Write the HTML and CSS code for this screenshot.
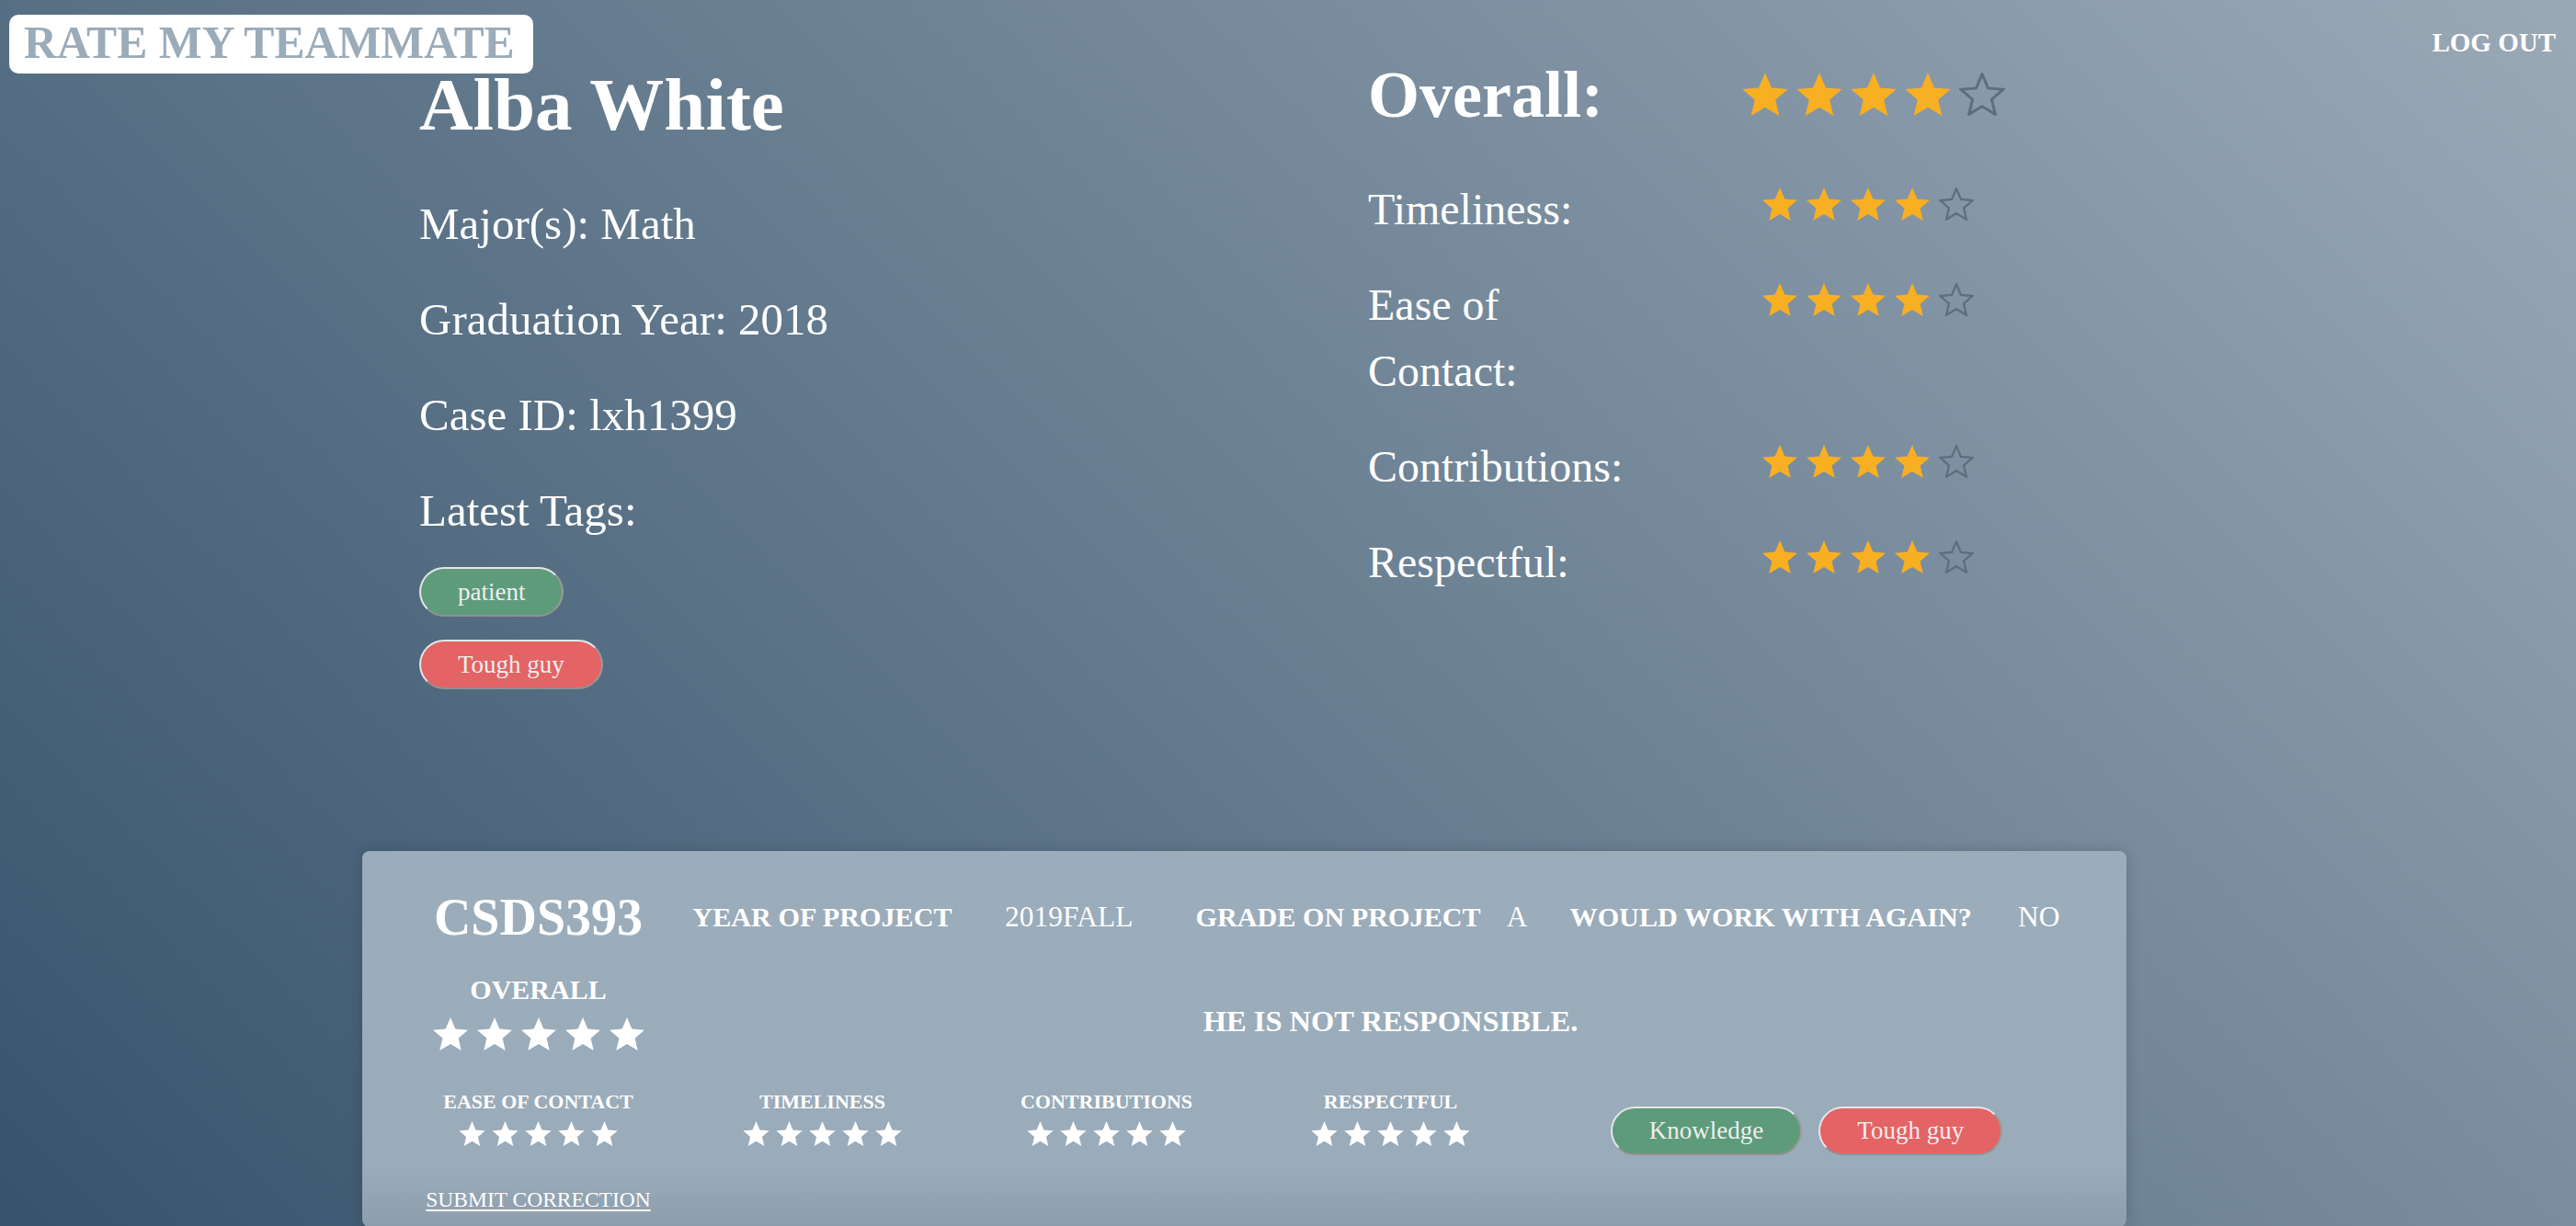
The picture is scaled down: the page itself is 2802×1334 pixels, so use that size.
FILE: index.html
```html
<!DOCTYPE html>
<html lang="en">
<head>
<meta charset="utf-8">
<title>Rate My Teammate - Alba White</title>
<link rel="stylesheet" href="styles.css">
</head>
<body>
<svg class="sprite" aria-hidden="true">
  <symbol id="star" viewBox="2 2 20 19"><path d="M12 17.27L18.18 21l-1.64-7.03L22 9.24l-7.19-.61L12 2 9.19 8.63 2 9.24l5.46 4.73L5.82 21z"/></symbol>
  <symbol id="star-o" viewBox="1.3 1.3 21.4 20.4"><path d="M12 17.27L18.18 21l-1.64-7.03L22 9.24l-7.19-.61L12 2 9.19 8.63 2 9.24l5.46 4.73L5.82 21z" fill="none" stroke="currentColor" stroke-width="1.3"/></symbol>
</svg>

<header class="topbar">
  <a class="brand" href="#">RATE MY TEAMMATE</a>
  <a class="logout" href="#">LOG OUT</a>
</header>

<main class="page">
  <section class="profile">
    <div class="info">
      <h1 class="name">Alba White</h1>
      <p class="fact">Major(s): Math</p>
      <p class="fact">Graduation Year: 2018</p>
      <p class="fact">Case ID: lxh1399</p>
      <p class="fact">Latest Tags:</p>
      <div class="tag-list">
        <span class="tag tag-good">patient</span>
        <span class="tag tag-bad">Tough guy</span>
      </div>
    </div>

    <div class="ratings">
      <div class="rating-row rating-overall">
        <span class="rating-label">Overall:</span>
        <div class="stars stars-lg">
          <svg class="star gold"><use href="#star"/></svg>
          <svg class="star gold"><use href="#star"/></svg>
          <svg class="star gold"><use href="#star"/></svg>
          <svg class="star gold"><use href="#star"/></svg>
          <svg class="star empty"><use href="#star-o"/></svg>
        </div>
      </div>
      <div class="rating-row">
        <span class="rating-label">Timeliness:</span>
        <div class="stars stars-md">
          <svg class="star gold"><use href="#star"/></svg>
          <svg class="star gold"><use href="#star"/></svg>
          <svg class="star gold"><use href="#star"/></svg>
          <svg class="star gold"><use href="#star"/></svg>
          <svg class="star empty"><use href="#star-o"/></svg>
        </div>
      </div>
      <div class="rating-row">
        <span class="rating-label">Ease of Contact:</span>
        <div class="stars stars-md">
          <svg class="star gold"><use href="#star"/></svg>
          <svg class="star gold"><use href="#star"/></svg>
          <svg class="star gold"><use href="#star"/></svg>
          <svg class="star gold"><use href="#star"/></svg>
          <svg class="star empty"><use href="#star-o"/></svg>
        </div>
      </div>
      <div class="rating-row">
        <span class="rating-label">Contributions:</span>
        <div class="stars stars-md">
          <svg class="star gold"><use href="#star"/></svg>
          <svg class="star gold"><use href="#star"/></svg>
          <svg class="star gold"><use href="#star"/></svg>
          <svg class="star gold"><use href="#star"/></svg>
          <svg class="star empty"><use href="#star-o"/></svg>
        </div>
      </div>
      <div class="rating-row">
        <span class="rating-label">Respectful:</span>
        <div class="stars stars-md">
          <svg class="star gold"><use href="#star"/></svg>
          <svg class="star gold"><use href="#star"/></svg>
          <svg class="star gold"><use href="#star"/></svg>
          <svg class="star gold"><use href="#star"/></svg>
          <svg class="star empty"><use href="#star-o"/></svg>
        </div>
      </div>
    </div>
  </section>

  <section class="reviews">
    <article class="review-card">
      <div class="review-head">
        <h2 class="course">CSDS393</h2>
        <span class="meta-label meta-year-label">YEAR OF PROJECT</span>
        <span class="meta-value meta-year">2019FALL</span>
        <span class="meta-label meta-grade-label">GRADE ON PROJECT</span>
        <span class="meta-value meta-grade">A</span>
        <span class="meta-label meta-again-label">WOULD WORK WITH AGAIN?</span>
        <span class="meta-value meta-again">NO</span>
      </div>

      <div class="review-row review-overall">
        <div class="stat stat-main">
          <span class="stat-label stat-label-lg">OVERALL</span>
          <div class="stars stars-md">
            <svg class="star white"><use href="#star"/></svg>
            <svg class="star white"><use href="#star"/></svg>
            <svg class="star white"><use href="#star"/></svg>
            <svg class="star white"><use href="#star"/></svg>
            <svg class="star white"><use href="#star"/></svg>
          </div>
        </div>
        <p class="comment">HE IS NOT RESPONSIBLE.</p>
      </div>

      <div class="review-row review-stats">
        <div class="stat">
          <span class="stat-label">EASE OF CONTACT</span>
          <div class="stars stars-sm">
            <svg class="star white"><use href="#star"/></svg>
            <svg class="star white"><use href="#star"/></svg>
            <svg class="star white"><use href="#star"/></svg>
            <svg class="star white"><use href="#star"/></svg>
            <svg class="star white"><use href="#star"/></svg>
          </div>
        </div>
        <div class="stat">
          <span class="stat-label">TIMELINESS</span>
          <div class="stars stars-sm">
            <svg class="star white"><use href="#star"/></svg>
            <svg class="star white"><use href="#star"/></svg>
            <svg class="star white"><use href="#star"/></svg>
            <svg class="star white"><use href="#star"/></svg>
            <svg class="star white"><use href="#star"/></svg>
          </div>
        </div>
        <div class="stat">
          <span class="stat-label">CONTRIBUTIONS</span>
          <div class="stars stars-sm">
            <svg class="star white"><use href="#star"/></svg>
            <svg class="star white"><use href="#star"/></svg>
            <svg class="star white"><use href="#star"/></svg>
            <svg class="star white"><use href="#star"/></svg>
            <svg class="star white"><use href="#star"/></svg>
          </div>
        </div>
        <div class="stat">
          <span class="stat-label">RESPECTFUL</span>
          <div class="stars stars-sm">
            <svg class="star white"><use href="#star"/></svg>
            <svg class="star white"><use href="#star"/></svg>
            <svg class="star white"><use href="#star"/></svg>
            <svg class="star white"><use href="#star"/></svg>
            <svg class="star white"><use href="#star"/></svg>
          </div>
        </div>
        <div class="review-tags">
          <span class="tag tag-card tag-good">Knowledge</span>
          <span class="tag tag-card tag-bad">Tough guy</span>
        </div>
      </div>

      <div class="review-row review-foot">
        <a class="correction" href="#">SUBMIT CORRECTION</a>
      </div>
    </article>
  </section>
</main>
</body>
</html>
```

FILE: styles.css
```css
html, body {
  margin: 0;
  padding: 0;
}

body {
  min-height: 100vh;
  font-family: "Liberation Serif", "Times New Roman", serif;
  color: #ffffff;
  background: linear-gradient(45deg, #37536c 0%, #9aa9b6 100%) fixed;
  overflow: hidden;
}

.sprite {
  position: absolute;
  width: 0;
  height: 0;
  overflow: hidden;
}

a {
  color: inherit;
  text-decoration: none;
}

/* ---------- top bar (overlays the page) ---------- */
.topbar {
  position: absolute;
  top: 0;
  left: 0;
  right: 0;
  display: flex;
  justify-content: space-between;
  align-items: flex-start;
  z-index: 5;
}

.brand {
  margin: 16px 0 0 10px;
  height: 64px;
  box-sizing: border-box;
  padding: 0 20px 2px 16px;
  background: #ffffff;
  border-radius: 10px;
  color: #9aabb9;
  font-weight: bold;
  font-size: 49.7px;
  line-height: 62px;
  white-space: nowrap;
}

.logout {
  margin: 29px 22px 0 0;
  font-weight: bold;
  font-size: 29px;
  line-height: 34px;
}

/* ---------- profile ---------- */
.profile {
  display: grid;
  grid-template-columns: 1032px 1fr;
  padding: 67px 0 0 456px;
}

.name {
  margin: 0;
  font-size: 81px;
  line-height: 94px;
  font-weight: bold;
}

.fact {
  margin: 32px 0 0;
  font-size: 49px;
  line-height: 72px;
}

.name + .fact {
  margin-top: 47px;
}

.tag-list {
  display: flex;
  flex-direction: column;
  align-items: flex-start;
  gap: 25px;
  margin-top: 25px;
}

.tag {
  display: inline-block;
  box-sizing: border-box;
  height: 54px;
  padding: 0 40px;
  border: 2px solid;
  border-color: #e4e6e8 #9a9a9a #8f9193 #e4e6e8;
  border-radius: 27px;
  font-size: 27px;
  line-height: 50px;
  color: #eeeeee;
  white-space: nowrap;
}

.tag-good {
  background: #5d9b7b;
}

.tag-bad {
  background: #e46365;
}

/* ---------- ratings ---------- */
.rating-row {
  display: grid;
  grid-template-columns: 300px 494px;
  align-items: start;
  margin-top: 32px;
}

.rating-overall + .rating-row {
  margin-top: 53px;
}

.rating-label {
  font-size: 48px;
  line-height: 72px;
}

.rating-overall {
  margin-top: 0;
}

.rating-overall .rating-label {
  font-size: 72px;
  font-weight: bold;
  line-height: 72px;
  white-space: nowrap;
}

.stars {
  display: flex;
  justify-content: center;
}

.ratings .stars {
  margin-top: 12px;
}

.ratings .stars-lg {
  margin-left: 5px;
}

.ratings .stars-md {
  margin-right: 7px;
}

.star {
  display: block;
  fill: currentColor;
}

.stars-lg {
  gap: 9px;
}

.stars-lg .star {
  width: 50px;
  height: 47px;
}

.stars-md {
  gap: 10px;
}

.stars-md .star {
  width: 38px;
  height: 36px;
}

.stars-sm {
  gap: 7px;
}

.stars-sm .star {
  width: 29px;
  height: 27px;
}

.gold {
  color: #f9af22;
}

.empty {
  color: #5d6e7e;
}

.white {
  color: #ffffff;
}

/* ---------- review card ---------- */
.reviews {
  margin-top: 176px;
  padding-left: 394px;
}

.review-card {
  width: 1919px;
  box-sizing: border-box;
  padding: 40px 28px 16px 37px;
  border-radius: 8px;
  background: linear-gradient(to bottom, #9bacba 0%, #9aabb9 84%, #8c9dac 100%);
  box-shadow: 0 0 14px rgba(30, 45, 60, 0.25);
}

.review-head {
  display: flex;
  align-items: center;
  height: 64px;
  white-space: nowrap;
}

.course {
  width: 309px;
  margin: 0;
  text-align: center;
  font-size: 56px;
  line-height: 64px;
  font-weight: bold;
}

.meta-label {
  font-size: 30.2px;
  font-weight: bold;
  line-height: 36px;
}

.meta-value {
  font-size: 31.5px;
  line-height: 36px;
}

.meta-year-label {
  width: 309px;
  text-align: center;
}

.meta-year {
  margin-left: 44px;
}

.meta-grade-label {
  margin-left: 68px;
}

.meta-grade {
  margin-left: 28px;
}

.meta-again-label {
  margin-left: 46px;
}

.meta-again {
  margin-left: 50px;
}

.review-row {
  display: grid;
  grid-template-columns: repeat(6, 309px);
  align-items: start;
}

.review-overall {
  margin-top: 29px;
}

.stat {
  display: flex;
  flex-direction: column;
  align-items: center;
}

.stat-label {
  font-size: 22px;
  line-height: 26px;
  font-weight: bold;
  white-space: nowrap;
}

.stat-label-lg {
  font-size: 30px;
  line-height: 36px;
}

.stat-main .stars {
  margin-top: 12px;
}

.review-stats .stars {
  margin-top: 8px;
}

.comment {
  grid-column: 2 / -1;
  margin: 33px 0 0;
  text-align: center;
  font-size: 32.5px;
  line-height: 38px;
  font-weight: bold;
}

.review-stats {
  margin-top: 43px;
}

.review-tags {
  grid-column: 5 / 7;
  display: flex;
  justify-content: center;
  gap: 18px;
  margin: 18px 22px 0 0;
}

.tag-card {
  height: 53px;
  line-height: 49px;
}

.review-foot {
  margin-top: 34px;
}

.correction {
  justify-self: center;
  font-size: 23.5px;
  line-height: 28px;
  text-decoration: underline;
  text-underline-offset: 3px;
  white-space: nowrap;
}
```
